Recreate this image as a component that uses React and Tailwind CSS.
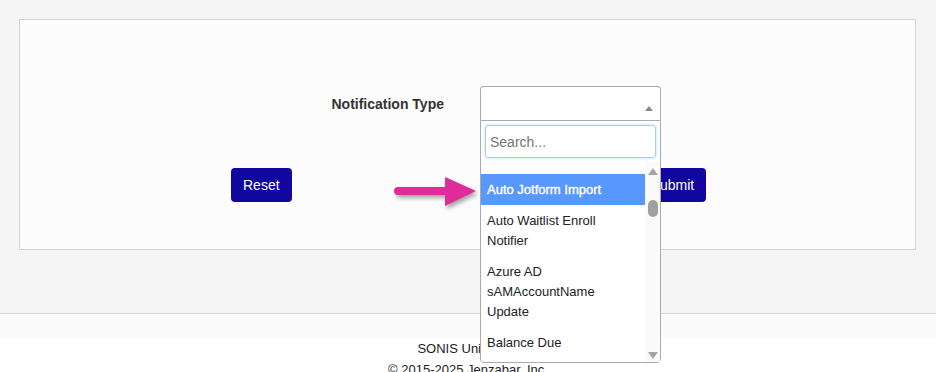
import React from 'react';

const OPTIONS = [
  { label: 'Auto Jotform Import', active: true },
  { label: 'Auto Waitlist Enroll Notifier' },
  { label: 'Azure AD sAMAccountName Update' },
  { label: 'Balance Due' },
  { label: 'Billing Reminder' },
];

function Scrollbar() {
  return (
    <div className="flex w-[15px] flex-col items-center bg-[#fafafa] pt-[6px] pb-[3px]">
      <svg width="10" height="7" viewBox="0 0 10 7">
        <polygon points="5,0 10,7 0,7" fill="#a3a3a3" />
      </svg>
      <div className="mt-[25px] h-[17px] w-[10px] rounded-full bg-[#a0a0a0]" />
      <div className="flex-1" />
      <svg width="10" height="7" viewBox="0 0 10 7">
        <polygon points="0,0 10,0 5,7" fill="#a3a3a3" />
      </svg>
    </div>
  );
}

function Dropdown() {
  return (
    <div className="absolute left-0 top-full z-10 w-[181px] rounded-b-[4px] border border-[#aaa] bg-white">
      <div className="p-[4px]">
        <input
          type="text"
          placeholder="Search..."
          className="h-[33px] w-full rounded-[3px] border border-[#a9cbee] px-[4px] text-[14px] text-[#333] shadow-[0_0_3px_rgba(82,168,236,0.45)] outline-none placeholder:text-[#757575]"
        />
      </div>
      <div className="flex h-[200px]">
        <ul className="flex-1 overflow-hidden pt-[12px]">
          {OPTIONS.map((opt) => (
            <li
              key={opt.label}
              className={
                opt.active
                  ? 'bg-[#5897fb] px-[6px] py-[5.5px] text-[13px] leading-[20px] text-white [-webkit-text-stroke:0.4px_#fff]'
                  : 'px-[6px] py-[5.5px] text-[13px] leading-[20px] text-[#222]'
              }
            >
              {opt.label}
            </li>
          ))}
        </ul>
        <Scrollbar />
      </div>
    </div>
  );
}

// pink annotation arrow pointing at the highlighted option
function PointerArrow() {
  return (
    <svg
      className="absolute left-[390px] top-[172px] drop-shadow-[2px_3px_2px_rgba(0,0,0,0.35)]"
      width="90"
      height="40"
      viewBox="0 0 90 40"
    >
      <line x1="8" y1="19" x2="58" y2="19" stroke="#e02b9a" strokeWidth="8" strokeLinecap="round" />
      <polygon points="55,5 86,19 55,34" fill="#e02b9a" />
    </svg>
  );
}

export default function App() {
  return (
    <div className="relative min-h-screen bg-white font-['Liberation_Sans',Arial,sans-serif] text-[#333]">
      <main className="bg-[#f5f5f5] pt-[19px] pr-[20px] pb-[63px] pl-[19px]">
        <section className="border border-[#d4d4d4] bg-[#fcfcfc] pt-[66px] pb-[47px]">
          <div className="flex items-center">
            <label className="w-[424px] pt-[3px] text-right text-[14px] font-bold text-[#333]">
              Notification Type
            </label>
            <div className="relative ml-[36px] w-[181px]">
              <div className="flex h-[34px] items-start justify-end rounded-t-[4px] border border-b-0 border-[#aaa] bg-white pt-[19px] pr-[7px]">
                <svg width="8" height="5" viewBox="0 0 8 5">
                  <polygon points="4,0 8,5 0,5" fill="#888" />
                </svg>
              </div>
              <Dropdown />
            </div>
          </div>
          <div className="mt-[48px] ml-[211px] flex gap-[347px]">
            <button className="h-[34px] rounded-[4px] bg-[#11069f] px-[12px] text-[14px] text-white">
              Reset
            </button>
            <button className="h-[34px] rounded-[4px] bg-[#11069f] px-[12px] text-[14px] text-white">
              Submit
            </button>
          </div>
        </section>
      </main>
      <footer className="border-t border-[#d4d4d4]">
        <div className="h-[24px] bg-[#fafafa]" />
        <div className="text-center text-[13px] leading-[21px] text-[#222]">
          <p>SONIS University</p>
          <p>© 2015-2025 Jenzabar, Inc.</p>
        </div>
      </footer>
      <PointerArrow />
    </div>
  );
}
